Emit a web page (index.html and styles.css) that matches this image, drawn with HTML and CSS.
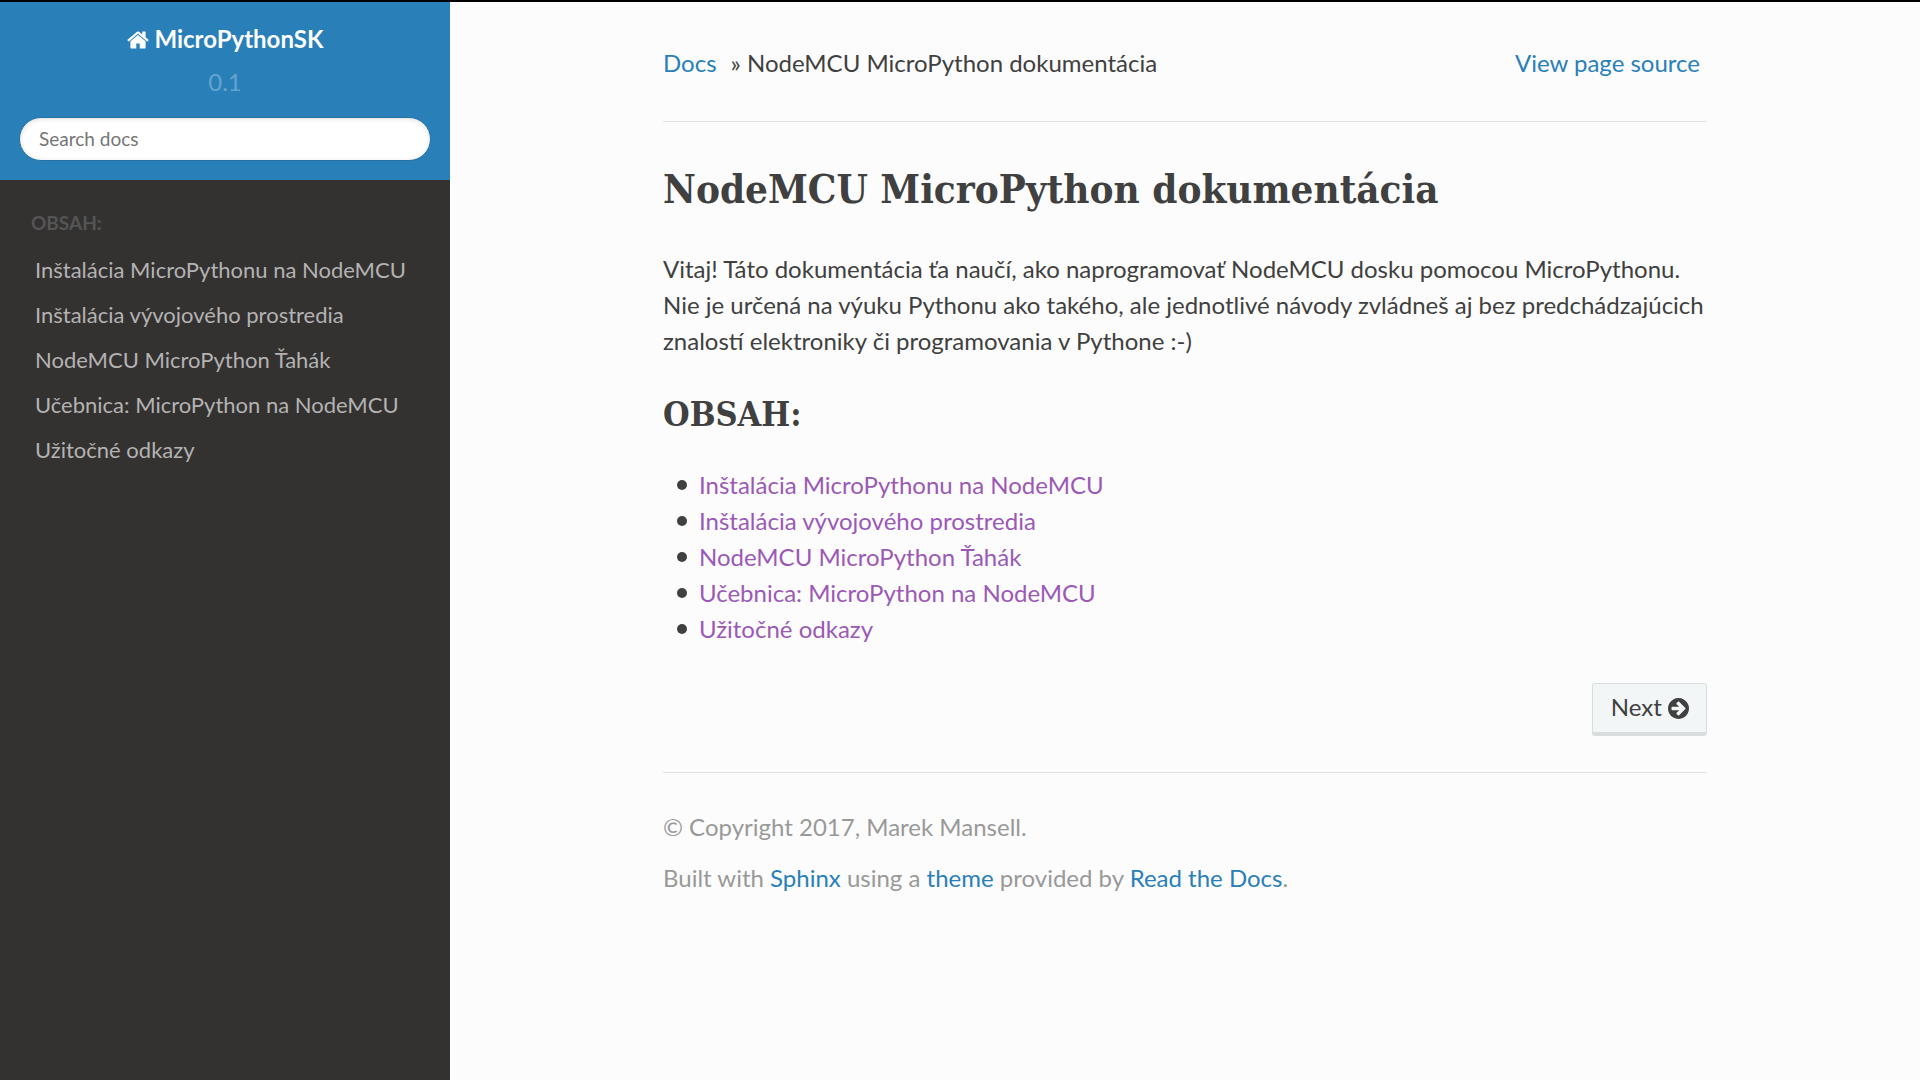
FILE: index.html
```html
<!DOCTYPE html>
<html lang="sk">
<head>
<meta charset="utf-8">
<title>NodeMCU MicroPython dokumentácia</title>
<link rel="stylesheet" href="styles.css">
</head>
<body>
<div class="layout">
  <nav class="side">
    <div class="side-header">
      <a class="home" href="#"><svg class="icon-home" viewBox="0 0 1664 1792" aria-hidden="true"><path d="M1408 992v480q0 26-19 45t-45 19H960v-384H704v384H320q-26 0-45-19t-19-45V992q0-1 .5-3t.5-3l575-474 575 474q1 2 1 6zm223-69l-62 74q-8 9-21 11h-3q-13 0-21-7L832 424l-692 577q-12 8-24 7-13-2-21-11l-62-74q-8-10-7-23.500t11-21.500l719-599q32-26 76-26t76 26l244 204V288q0-14 9-23t23-9h192q14 0 23 9t9 23v408l219 182q10 8 11 21.500t-7 23.500z"/></svg> MicroPythonSK</a>
      <div class="version">0.1</div>
      <form role="search">
        <input class="search" type="text" placeholder="Search docs" aria-label="Search docs">
      </form>
    </div>
    <p class="caption">OBSAH:</p>
    <ul class="menu">
      <li><a href="#">Inštalácia MicroPythonu na NodeMCU</a></li>
      <li><a href="#">Inštalácia vývojového prostredia</a></li>
      <li><a href="#">NodeMCU MicroPython Ťahák</a></li>
      <li><a href="#">Učebnica: MicroPython na NodeMCU</a></li>
      <li><a href="#">Užitočné odkazy</a></li>
    </ul>
  </nav>
  <div class="content">
    <div class="crumbs">
      <div class="trail"><a href="#">Docs</a><span>» NodeMCU MicroPython dokumentácia</span></div>
      <a class="source" href="#">View page source</a>
    </div>
    <main>
      <h1>NodeMCU MicroPython dokumentácia</h1>
      <p class="intro">Vitaj! Táto dokumentácia ťa naučí, ako naprogramovať NodeMCU dosku pomocou MicroPythonu. Nie je určená na výuku Pythonu ako takého, ale jednotlivé návody zvládneš aj bez predchádzajúcich znalostí elektroniky či programovania v Pythone :-)</p>
      <h2>OBSAH:</h2>
      <ul class="toc">
        <li><a href="#">Inštalácia MicroPythonu na NodeMCU</a></li>
        <li><a href="#">Inštalácia vývojového prostredia</a></li>
        <li><a href="#">NodeMCU MicroPython Ťahák</a></li>
        <li><a href="#">Učebnica: MicroPython na NodeMCU</a></li>
        <li><a href="#">Užitočné odkazy</a></li>
      </ul>
    </main>
    <footer>
      <div class="pager">
        <a class="next" href="#">Next <svg class="icon-next" viewBox="128 128 1536 1536" aria-hidden="true"><path d="M1413 896q0-27-18-45l-91-91-362-362q-18-18-45-18t-45 18l-91 91q-18 18-18 45t18 45l189 189H448q-26 0-45 19t-19 45v128q0 26 19 45t45 19h502l-189 189q-19 19-19 45t19 45l91 91q18 18 45 18t45-18l362-362 91-91q18-18 18-45zm251 0q0 209-103 385.500t-279.500 279.500-385.500 103-385.500-103-279.500-279.500-103-385.500 103-385.500 279.500-279.500 385.500-103 385.500 103 279.500 279.500 103 385.500z"/></svg></a>
      </div>
      <div class="legal">
        <p>© Copyright 2017, Marek Mansell.</p>
        <p>Built with <a href="#">Sphinx</a> using a <a href="#">theme</a> provided by <a href="#">Read the Docs</a>.</p>
      </div>
    </footer>
  </div>
</div>
</body>
</html>
```
FILE: styles.css
```css
* { box-sizing: border-box; }
body {
  margin: 0;
  min-height: 100vh;
  display: flex;
  border-top: 2px solid #000;
  background: #fcfcfc;
  color: #404040;
  font: 24px/36px Lato, "Noto Sans", sans-serif;
}
a { color: #2980b9; text-decoration: none; }
p, h1, h2, ul { margin: 0; padding: 0; }

.layout { flex: 1; display: flex; }

/* sidebar */
.side { flex: none; width: 450px; background: #343131; }
.side-header {
  display: flex;
  flex-direction: column;
  gap: 7px;
  padding: 19px;
  background: #2980b9;
  text-align: center;
}
.home { color: #fcfcfc; font-weight: 700; }
.icon-home { width: 22px; height: 24px; fill: currentColor; vertical-align: -4px; }
.version { color: rgba(255, 255, 255, .3); }
.side-header form { display: flex; padding-top: 10px; }
.search {
  width: 100%;
  height: 44px;
  padding: 0 19px 2px;
  border: 1px solid #2472a4;
  border-radius: 50px;
  background: #fff;
  box-shadow: inset 0 1px 5px #ddd;
  color: #404040;
  font: 19px Lato, "Noto Sans", sans-serif;
}
.search::placeholder { color: #757575; }
.caption {
  padding: 19px 31px 0;
  color: #555;
  font-size: 19px;
  font-weight: 700;
  line-height: 48px;
}
.menu { list-style: none; }
.menu a {
  display: block;
  padding: 9px 35px 8px;
  color: #b3b3b3;
  font-size: 22px;
  line-height: 28px;
}

/* document */
.content { flex: 0 1 1200px; min-width: 0; margin: 0 auto; padding: 43px 78px; }
.crumbs {
  display: flex;
  justify-content: space-between;
  padding-bottom: 40px;
  border-bottom: 1px solid #e1e4e5;
}
.trail { display: flex; gap: 14px; }
.source { padding-right: 7px; }
h1, h2 { font-family: "Roboto Slab", "DejaVu Serif Condensed", "DejaVu Serif", serif; font-weight: 700; }
h1 { padding: 38px 0 33px; font-size: 40px; line-height: 58px; }
h2 { padding: 29px 0 27px; font-size: 34px; line-height: 52px; }
.toc { padding-left: 14px; list-style: none; }
.toc li { display: flex; align-items: center; gap: 12px; }
.toc li::before {
  content: "";
  flex: none;
  width: 10px;
  height: 10px;
  border-radius: 50%;
  background: #404040;
}
.toc a { color: #9b59b6; }
.pager { display: flex; justify-content: flex-end; padding: 36px 0; }
.next {
  padding: 7px 17px 9px 18px;
  border: 1px solid #d9dddd;
  border-bottom: 4px solid #d9dddd;
  border-radius: 3px;
  background: #f3f6f6;
  color: #404040;
  line-height: 32px;
}
.icon-next { width: 21px; height: 21px; fill: currentColor; vertical-align: -3px; }
.legal {
  display: flex;
  flex-direction: column;
  gap: 15px;
  padding-top: 36px;
  border-top: 1px solid #e1e4e5;
  color: #999;
}
```
